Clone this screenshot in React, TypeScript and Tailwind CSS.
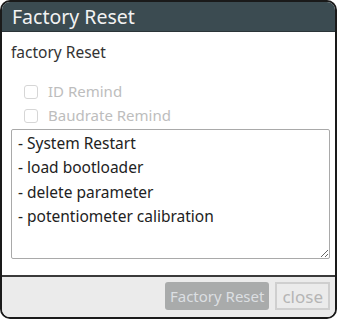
import { useState } from "react";

export default function App() {
  const [idRemind, setIdRemind] = useState(false);
  const [baudRemind, setBaudRemind] = useState(false);

  return (
    <div className="w-[338px] h-[320px] bg-white" style={{ fontFamily: '"Noto Sans", "Open Sans", sans-serif' }}>
      <div className="w-[337px] h-[319px] flex flex-col rounded-[10px] border-2 border-[#1a1a1a] overflow-hidden bg-white">
        {/* Header */}
        <div className="h-[30px] shrink-0 bg-[#3b4b51] border-b border-[#2b3438] flex items-center px-[10px]">
          <span className="text-[19.5px] leading-none text-[#f2f2f2]">Factory Reset</span>
        </div>

        {/* Content */}
        <div className="flex-1 flex flex-col px-[9px]">
          <p className="mt-[10px] text-[15.5px] leading-[20px] text-[#333]">factory Reset</p>

          <div className="mt-[20px] flex flex-col gap-[5px] pl-[13px]">
            <label className="flex items-center gap-[10px] h-[19px] text-[15px] text-[#bdbdbd]">
              <input
                type="checkbox"
                disabled
                checked={idRemind}
                onChange={(e) => setIdRemind(e.target.checked)}
                className="appearance-none w-[14px] h-[14px] rounded-[3px] border border-[#d6d6d6] bg-white"
              />
              ID Remind
            </label>
            <label className="flex items-center gap-[10px] h-[19px] text-[15px] text-[#bdbdbd]">
              <input
                type="checkbox"
                disabled
                checked={baudRemind}
                onChange={(e) => setBaudRemind(e.target.checked)}
                className="appearance-none w-[14px] h-[14px] rounded-[3px] border border-[#d6d6d6] bg-white"
              />
              Baudrate Remind
            </label>
          </div>

          <textarea
            readOnly
            className="mt-[4px] h-[130px] w-[319px] resize border border-[#a9a9a9] rounded-[2px] px-[6px] py-[1px] text-[15.5px] leading-[24.3px] text-[#222] outline-none"
            style={{ fontFamily: '"Noto Sans", "Open Sans", sans-serif' }}
            defaultValue={"- System Restart\n- load bootloader\n- delete parameter\n- potentiometer calibration"}
          />
        </div>

        {/* Footer */}
        <div className="h-[42px] shrink-0 bg-[#ebebeb] border-t-2 border-[#3a3a3a] flex items-center justify-end gap-[6px] pr-[5px] pb-[2px]">
          <button
            disabled
            className="h-[28px] px-[5px] rounded-[3px] bg-[#a9abab] text-[15px] text-[#dcdfe2]"
          >
            Factory Reset
          </button>
          <button
            disabled
            className="h-[28px] px-[5px] border-2 border-[#cfcfcf] bg-[#ebebeb] text-[17px] text-[#b5b5b5]"
          >
            close
          </button>
        </div>
      </div>
    </div>
  );
}
